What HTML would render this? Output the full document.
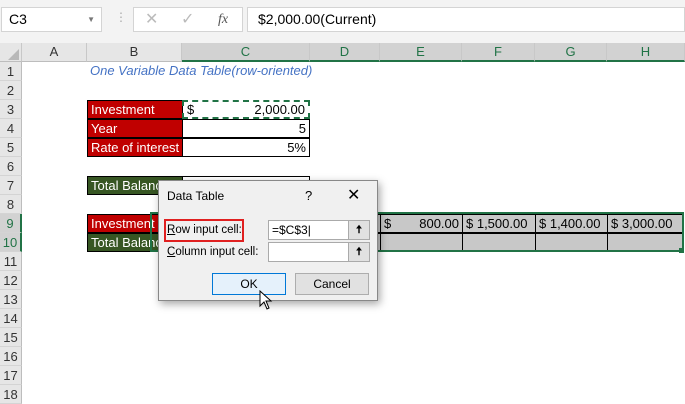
<!DOCTYPE html>
<html><head><style>
*{margin:0;padding:0;box-sizing:border-box}
body{width:685px;height:400px;background:#fff;font-family:"Liberation Sans",sans-serif;font-size:13px;position:relative;overflow:hidden;color:#000}
.a{position:absolute}
.ch{position:absolute;top:43px;height:19px;background:#e6e6e6;border-right:1px solid #c8c8c8;border-bottom:1px solid #bdbdbd;text-align:center;line-height:18px;color:#333}
.ch.s{background:#d2d2d2;border-bottom:2px solid #217346;color:#217346}
.rh{position:absolute;left:0;width:22px;height:19px;background:#e6e6e6;border-bottom:1px solid #d4d4d4;border-right:1px solid #bdbdbd;text-align:center;line-height:19px;color:#333}
.rh.s{background:#d2d2d2;border-right:2px solid #217346;color:#217346}
.c{position:absolute;height:19px;line-height:18px;padding:0 3px;white-space:nowrap;overflow:hidden}
.red{background:#c00000;color:#fff;border:1px solid #000}
.grn{background:#375623;color:#fff;border:1px solid #000}
.w{border:1px solid #000;text-align:right}
.g{background:#c8c8c8;border:1px solid #000}
</style></head><body>
<div class="a" style="left:0;top:0;width:685px;height:43px;background:#f3f3f3"></div>
<div class="a" style="left:1px;top:7px;width:101px;height:25px;background:#fff;border:1px solid #d4d4d4;line-height:23px;padding-left:7px;font-size:14px">C3<span class="a" style="right:6px;top:0;font-size:8px;color:#777">▼</span></div>
<div class="a" style="left:115px;top:10px;color:#aaa;font-size:12px">⋮</div>
<div class="a" style="left:133px;top:7px;width:110px;height:25px;background:#fff;border:1px solid #d4d4d4;color:#bbb;font-size:16px;line-height:23px"><span class="a" style="left:11px">✕</span><span class="a" style="left:47px">✓</span><span class="a" style="left:84px;color:#555;font-style:italic;font-family:'Liberation Serif',serif;font-size:14px">fx</span></div>
<div class="a" style="left:247px;top:7px;width:438px;height:25px;background:#fff;border:1px solid #d4d4d4;line-height:23px;padding-left:10px;font-size:14px">$2,000.00(Current)</div>
<div class="ch" style="left:0;width:22px"></div>
<div class="a" style="left:8px;top:49px;width:0;height:0;border-left:11px solid transparent;border-bottom:11px solid #b8b8b8"></div>
<div class="ch" style="left:22px;width:65px">A</div>
<div class="ch" style="left:87px;width:95px">B</div>
<div class="ch s" style="left:182px;width:128px">C</div>
<div class="ch s" style="left:310px;width:70px">D</div>
<div class="ch s" style="left:380px;width:82px">E</div>
<div class="ch s" style="left:462px;width:73px">F</div>
<div class="ch s" style="left:535px;width:72px">G</div>
<div class="ch s" style="left:607px;width:78px">H</div>
<div class="rh" style="top:62px">1</div><div class="rh" style="top:81px">2</div><div class="rh" style="top:100px">3</div><div class="rh" style="top:119px">4</div><div class="rh" style="top:138px">5</div><div class="rh" style="top:157px">6</div><div class="rh" style="top:176px">7</div><div class="rh" style="top:195px">8</div><div class="rh s" style="top:214px">9</div><div class="rh s" style="top:233px">10</div><div class="rh" style="top:252px">11</div><div class="rh" style="top:271px">12</div><div class="rh" style="top:290px">13</div><div class="rh" style="top:309px">14</div><div class="rh" style="top:328px">15</div><div class="rh" style="top:347px">16</div><div class="rh" style="top:366px">17</div><div class="rh" style="top:385px">18</div>
<div class="c" style="left:87px;top:62px;color:#4472c4;font-style:italic">One Variable Data Table(row-oriented)</div>
<div class="c red" style="left:87px;top:100px;width:96px">Investment</div>
<div class="c red" style="left:87px;top:119px;width:96px">Year</div>
<div class="c red" style="left:87px;top:138px;width:96px">Rate of interest</div>
<div class="c" style="left:182px;top:100px;width:128px;border:2px dashed #217346;line-height:15px">$<span style="float:right">2,000.00</span></div>
<div class="c w" style="left:182px;top:119px;width:128px">5</div>
<div class="c w" style="left:182px;top:138px;width:128px">5%</div>
<div class="c grn" style="left:87px;top:176px;width:96px">Total Balance</div>
<div class="c w" style="left:182px;top:176px;width:128px"></div>
<div class="c red" style="left:87px;top:214px;width:96px">Investment</div>
<div class="c grn" style="left:87px;top:233px;width:96px">Total Balance</div>
<div class="c g" style="left:182px;top:214px;width:199px"></div>
<div class="c g" style="left:182px;top:233px;width:199px"></div>
<div class="c g" style="left:380px;top:214px;width:83px">$<span style="float:right">800.00</span></div>
<div class="c g" style="left:462px;top:214px;width:74px">$ 1,500.00</div>
<div class="c g" style="left:535px;top:214px;width:73px">$ 1,400.00</div>
<div class="c g" style="left:607px;top:214px;width:76px">$ 3,000.00</div>
<div class="c g" style="left:380px;top:233px;width:83px"></div>
<div class="c g" style="left:462px;top:233px;width:74px"></div>
<div class="c g" style="left:535px;top:233px;width:73px"></div>
<div class="c g" style="left:607px;top:233px;width:76px"></div>
<div class="a" style="left:150px;top:212px;width:534px;height:40px;border:2px solid #217346"></div>
<div class="a" style="left:679px;top:248px;width:5px;height:5px;background:#217346"></div>
<div class="a" style="left:158px;top:180px;width:220px;height:121px;background:#f0f0f0;border:1px solid #888;box-shadow:2px 3px 8px rgba(0,0,0,.35)">
<div class="a" style="left:8px;top:8px;font-size:12px">Data Table</div>
<div class="a" style="left:146px;top:7px;font-size:13px">?</div>
<div class="a" style="left:188px;top:4px;font-size:16px">✕</div>
<div class="a" style="left:5px;top:38px;width:80px;height:23px;border:2px solid #e02020"></div>
<div class="a" style="left:8px;top:43px;font-size:11.5px"><u>R</u>ow input cell:</div>
<div class="a" style="left:8px;top:65px;font-size:11.5px"><u>C</u>olumn input cell:</div>
<div class="a" style="left:109px;top:39px;width:102px;height:20px;background:#fff;border:1px solid #aaa;font-size:12px;line-height:18px;padding-left:3px">=$C$3|</div>
<div class="a" style="left:189px;top:40px;width:21px;height:18px;background:#e1e1e1;border-left:1px solid #aaa;text-align:center;font-size:11px;font-weight:bold;line-height:18px">🠅</div>
<div class="a" style="left:109px;top:61px;width:102px;height:20px;background:#fff;border:1px solid #aaa"></div>
<div class="a" style="left:189px;top:62px;width:21px;height:18px;background:#e1e1e1;border-left:1px solid #aaa;text-align:center;font-size:11px;font-weight:bold;line-height:18px">🠅</div>
<div class="a" style="left:53px;top:92px;width:74px;height:22px;background:#e5f1fb;border:1px solid #0078d7;text-align:center;line-height:20px;font-size:12px">OK</div>
<div class="a" style="left:136px;top:92px;width:74px;height:22px;background:#e1e1e1;border:1px solid #adadad;text-align:center;line-height:20px;font-size:12px">Cancel</div>
</div>
<svg class="a" style="left:259px;top:290px" width="14" height="22"><path d="M1 1 L1 16 L5 12 L8 19 L10 18 L7 11 L12 11 Z" fill="#fff" stroke="#000" stroke-width="1"/></svg>
</body></html>
